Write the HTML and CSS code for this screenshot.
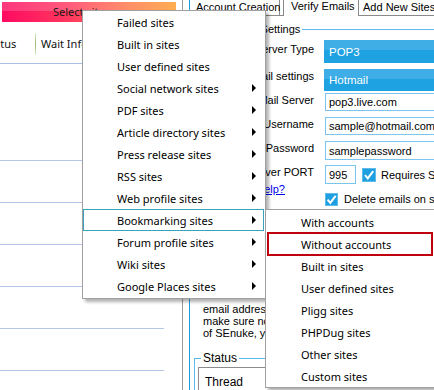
FILE: index.html
```html
<!DOCTYPE html>
<html>
<head>
<meta charset="utf-8">
<link rel="stylesheet" href="styles.css">
</head>
<body>
<div class="app">
  <div class="left">
    <div class="btn">Select sites</div>
    <div class="grid">
      <div class="grid-head">
        <div class="gh gh-status">Status</div>
        <div class="gh-sep"></div>
        <div class="gh gh-wait">Wait Info</div>
      </div>
      <div class="grow grow-first"></div>
      <div class="grow"></div>
      <div class="grow"></div>
      <div class="grow"></div>
      <div class="grow"></div>
      <div class="grow"></div>
    </div>
  </div>
  <div class="right">
    <div class="tabs">
      <div class="tab tab-first">Account Creation</div>
      <div class="tab tab-active">Verify Emails</div>
      <div class="tab tab-last">Add New Sites</div>
    </div>
    <fieldset class="group settings">
      <legend>Email Settings</legend>
      <div class="frow r1"><div class="lbl">Server Type</div><div class="combo">POP3</div></div>
      <div class="frow r2"><div class="lbl">Mail settings</div><div class="combo">Hotmail</div></div>
      <div class="frow r3"><div class="lbl">Mail Server</div><div class="tb">pop3.live.com</div></div>
      <div class="frow r4"><div class="lbl">Username</div><div class="tb">sample@hotmail.com</div></div>
      <div class="frow r5"><div class="lbl">Password</div><div class="tb">samplepassword</div></div>
      <div class="frow r6"><div class="lbl">Server PORT</div><div class="tb port">995</div>
        <svg class="chk chk-ssl" width="14" height="14" viewBox="0 0 14 14"><rect x="0.5" y="0.5" width="13" height="13" fill="#1e9fe0" stroke="#5dbcec"/><path d="M3 7.2 L5.8 10.4 L11.2 3.2" stroke="#fff" stroke-width="2" fill="none"/></svg>
        <span class="chk-text">Requires SSL</span></div>
      <div class="frow r7"><span class="help">Help?</span></div>
      <div class="frow r8">
        <svg class="chk chk-del" width="13" height="13" viewBox="0 0 13 13"><rect x="0.5" y="0.5" width="12" height="12" fill="#1e9fe0" stroke="#5dbcec"/><path d="M2.6 6.6 L5.3 9.8 L10.6 2.8" stroke="#fff" stroke-width="2" fill="none"/></svg>
        <span class="chk-text del-text">Delete emails on server after verification</span></div>
    </fieldset>
    <div class="desc">
      <div>email address that you want to use,</div>
      <div>make sure not to use it outside</div>
      <div>of SEnuke, you may lose emails.</div>
    </div>
    <fieldset class="group status">
      <legend>Status</legend>
      <div class="thread-box"><div class="thread-head">Thread</div></div>
    </fieldset>
  </div>
</div>

<div class="menu menu-main">
  <div class="mi"><span>Failed sites</span></div>
  <div class="mi"><span>Built in sites</span></div>
  <div class="mi"><span>User defined sites</span></div>
  <div class="mi"><span>Social network sites</span><i class="arrow"></i></div>
  <div class="mi"><span>PDF sites</span><i class="arrow"></i></div>
  <div class="mi"><span>Article directory sites</span><i class="arrow"></i></div>
  <div class="mi"><span>Press release sites</span><i class="arrow"></i></div>
  <div class="mi"><span>RSS sites</span><i class="arrow"></i></div>
  <div class="mi"><span>Web profile sites</span><i class="arrow"></i></div>
  <div class="mi hl"><span>Bookmarking sites</span><i class="arrow"></i></div>
  <div class="mi"><span>Forum profile sites</span><i class="arrow"></i></div>
  <div class="mi"><span>Wiki sites</span><i class="arrow"></i></div>
  <div class="mi"><span>Google Places sites</span><i class="arrow"></i></div>
</div>

<div class="menu menu-sub">
  <div class="mi"><span>With accounts</span></div>
  <div class="mi mark"><span>Without accounts</span></div>
  <div class="mi"><span>Built in sites</span></div>
  <div class="mi"><span>User defined sites</span></div>
  <div class="mi"><span>Pligg sites</span></div>
  <div class="mi"><span>PHPDug sites</span></div>
  <div class="mi"><span>Other sites</span></div>
  <div class="mi"><span>Custom sites</span></div>
</div>
</body>
</html>
```
FILE: styles.css
```css
* { box-sizing: border-box; }
html, body { margin: 0; padding: 0; }
body {
  width: 434px;
  height: 390px;
  overflow: hidden;
  background: #fff;
  color: #000;
  font-family: "Liberation Sans", Arial, sans-serif;
  font-size: 11px;
  position: relative;
}
.app { display: flex; height: 390px; }

/* left panel */
.left {
  flex: none;
  width: 183px;
  border-right: 1px solid #9c9c9c;
  font-family: "Noto Sans", sans-serif;
  font-size: 11px;
}
.btn {
  margin: 2px 0 0 2px;
  width: 174px;
  height: 20px;
  line-height: 20px;
  padding-left: 51px;
  white-space: nowrap;
  overflow: hidden;
  color: #1a1a1a;
  background:
    linear-gradient(to bottom, rgba(255,255,255,0.18) 0, rgba(255,255,255,0.18) 45%, rgba(255,255,255,0) 45%),
    linear-gradient(to right, #ff0a62 0%, #ff3a5e 40%, #ff7548 72%, #ff9b2b 100%);
}
.grid { width: 164px; margin-top: 2px; }
.grid-head {
  display: flex;
  align-items: center;
  height: 40px;
  border-bottom: 1px solid #a9c0e4;
}
.gh { white-space: nowrap; overflow: hidden; line-height: 16px; color: #111; }
.gh-status { width: 35px; text-indent: -16px; }
.gh-sep {
  width: 1px;
  height: 22px;
  background: linear-gradient(#dde9c8, #98b46c 50%, #dde9c8);
}
.gh-wait { flex: 1; padding-left: 5px; }
.grow { height: 42px; border-bottom: 1px solid #b3c6e7; }
.grow-first { height: 97px; }

/* right panel */
.right {
  flex: 1;
  min-width: 0;
  margin-left: 6px;
  border-left: 1px solid #1e9ee0;
  overflow: hidden;
}
.tabs {
  display: flex;
  height: 16px;
  border-bottom: 1px solid #8a8a8a;
  white-space: nowrap;
}
.tab { flex: none; height: 15px; line-height: 15px; background: #fff; }
.tab-first { width: 90px; padding-left: 6px; border-right: 1px solid #8a8a8a; }
.tab-active {
  margin-left: 3px;
  width: 76px;
  height: 16px;
  line-height: 12px;
  padding-left: 7px;
  border-left: 1px solid #8a8a8a;
  border-right: 1px solid #8a8a8a;
  margin-bottom: -1px;
}
.tab-last { padding-left: 4px; }

.group {
  margin: 0 0 0 4px;
  padding: 0;
  border: 1px solid #5cb9ec;
  min-width: 0;
  width: 300px;
}
.group legend { padding: 0 2px; line-height: 14px; }
.settings { margin-top: 6px; height: 268px; padding-top: 4px; }
.settings legend { margin-left: 33px; }

.frow { display: flex; align-items: center; white-space: nowrap; }
.lbl {
  flex: none;
  width: 119px;
  margin-right: 10px;
  text-align: right;
  align-self: flex-start;
  line-height: 14px;
}
.r1 { height: 23px; }
.r1 .lbl { padding-top: 2px; }
.r2 { height: 22px; margin-top: 6px; }
.r3 { height: 18px; margin-top: 2px; }
.r4 { height: 18px; margin-top: 6px; }
.r5 { height: 19px; margin-top: 6px; }
.r6 { height: 19px; margin-top: 5px; }
.r7 { height: 9px; }
.r8 { height: 12px; }

.combo {
  flex: none;
  align-self: stretch;
  width: 130px;
  padding-left: 5px;
  display: flex;
  align-items: center;
  color: #fff;
  font-size: 11.5px;
  background: linear-gradient(#40aee6 0, #40aee6 45%, #1ea2e1 45%, #1ea2e1 100%);
}
.tb {
  flex: none;
  align-self: stretch;
  width: 130px;
  margin-left: 1px;
  padding-left: 3px;
  border: 1px solid #7cc5ee;
  display: flex;
  align-items: center;
  background: #fff;
}
.tb.port { width: 31px; }
.chk { flex: none; display: block; }
.chk-ssl { margin-left: 6px; }
.chk-text { margin-left: 5px; }
.help {
  width: 90px;
  text-align: right;
  line-height: 12px;
  color: #0000ee;
  text-decoration: underline;
}
.chk-del { margin-left: 130px; }
.del-text { margin-left: 6px; }

.desc {
  height: 61px;
  padding: 13px 0 0 13px;
  line-height: 12px;
  white-space: nowrap;
}
.status { margin-top: 0; height: 60px; }
.status legend { margin-left: 6px; font-size: 12px; }
.thread-box {
  margin: 2px 0 0 3px;
  height: 40px;
  border: 1px solid #8c8c8c;
}
.thread-head { padding-left: 6px; line-height: 28px; font-size: 12px; }

/* context menus */
.menu {
  position: absolute;
  background: #fff;
  border: 1px solid #a0a0a0;
  font-family: "Noto Sans", sans-serif;
  font-size: 11px;
  color: #000;
  box-shadow: 3px 3px 3px rgba(0,0,0,0.3);
}
.menu-main { left: 82px; top: 10px; width: 184px; padding-bottom: 1px; z-index: 1; }
.menu-sub { left: 265px; top: 209px; width: 190px; padding-top: 1px; z-index: 2; }
.mi {
  height: 22px;
  padding: 0 9px 0 34px;
  display: flex;
  align-items: center;
  justify-content: space-between;
  white-space: nowrap;
}
.mi.hl {
  margin-right: 1px;
  border: 1px solid #3aa2bb;
  padding: 0 7px 0 33px;
}
.menu-sub .mi { padding-left: 35px; }
.menu-sub .mi.mark {
  width: 166px;
  height: 24px;
  margin: -1px 0 -1px 1px;
  border: 2px solid #c0000c;
  padding-left: 32px;
}
.arrow {
  display: block;
  width: 0;
  height: 0;
  border-left: 4px solid #000;
  border-top: 4px solid transparent;
  border-bottom: 4px solid transparent;
}
```
